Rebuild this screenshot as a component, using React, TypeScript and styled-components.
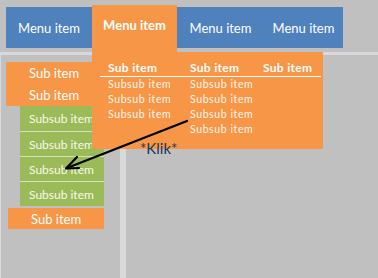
import React from "react";
import styled, { createGlobalStyle } from "styled-components";

const Global = createGlobalStyle`
  html, body { margin: 0; padding: 0; background: #c0c0c0; }
  body { font-family: Lato, "Open Sans", sans-serif; }
`;

const ORANGE = "#f79646";
const BLUE = "#4f81bd";
const GREEN = "#9bbb59";
const GRAY = "#c0c0c0";
const LIGHT = "#d9d9d9";

const Screen = styled.div`
  position: relative;
  width: 378px;
  height: 278px;
  overflow: hidden;
  background: ${GRAY};
  display: flex;
  flex-direction: column;
  font-family: Lato, "Open Sans", sans-serif;
`;

const Header = styled.div`
  height: 52px;
  box-sizing: border-box;
  padding: 7px 0 0 6px;
  flex-shrink: 0;
`;

const NavBar = styled.nav`
  display: flex;
  width: 337px;
  height: 41px;
  background: ${BLUE};
`;

const NavItem = styled.div<{ $w: number }>`
  position: relative;
  width: ${(p) => p.$w}px;
  display: flex;
  align-items: center;
  justify-content: center;
  color: #ffffff;
  font-size: 13px;
  white-space: nowrap;
`;

const ActiveTab = styled.div`
  position: absolute;
  left: 0;
  right: 0;
  top: -2px;
  bottom: -4px;
  background: ${ORANGE};
  color: #fff;
  font-weight: 700;
  font-size: 13px;
  display: flex;
  justify-content: center;
  padding-top: 12px;
  box-sizing: border-box;
  z-index: 2;
`;

const HStrip = styled.div`
  height: 3px;
  background: ${LIGHT};
  flex-shrink: 0;
`;

const Body = styled.div`
  flex: 1;
  display: flex;
`;

const LeftCol = styled.div`
  width: 119px;
  border-left: 1px solid ${LIGHT};
  padding-top: 7px;
  display: flex;
  flex-direction: column;
  align-items: flex-start;
`;

const VStrip = styled.div`
  width: 6px;
  background: ${LIGHT};
`;

const RightCol = styled.div`
  flex: 1;
`;

const SubBlock = styled.div<{ $ml: number; $w: number }>`
  margin-left: ${(p) => p.$ml}px;
  width: ${(p) => p.$w}px;
  background: ${ORANGE};
  display: flex;
  flex-direction: column;
`;

const SubItem = styled.div<{ $h: number }>`
  height: ${(p) => p.$h}px;
  display: flex;
  align-items: center;
  padding-left: 23px;
  color: #fff;
  font-size: 13px;
`;

const GreenBlock = styled.div`
  margin-left: 19px;
  width: 84px;
  display: flex;
  flex-direction: column;
`;

const GreenItem = styled.div<{ $first?: boolean }>`
  height: 25px;
  box-sizing: border-box;
  background: ${GREEN};
  border-top: ${(p) => (p.$first ? "none" : `1px solid #d4dfbd`)};
  display: flex;
  align-items: center;
  padding-left: 9px;
  color: #f8f8ea;
  font-size: 12px;
  white-space: nowrap;
  overflow: hidden;
`;

const Dropdown = styled.div`
  position: absolute;
  left: 92px;
  top: 52px;
  width: 231px;
  height: 97px;
  background: ${ORANGE};
  box-sizing: border-box;
  padding: 8px 2px 0 8px;
  z-index: 3;
`;

const HeaderRow = styled.div`
  display: grid;
  grid-template-columns: 82px 73px 1fr;
  padding-left: 8px;
  border-bottom: 1px solid #ffffff;
  height: 17px;
  box-sizing: border-box;
`;

const ColHead = styled.div`
  color: #fff;
  font-weight: 700;
  font-size: 12px;
  letter-spacing: 0.3px;
  line-height: 16px;
  white-space: nowrap;
`;

const Columns = styled.div`
  display: grid;
  grid-template-columns: 82px 73px 1fr;
  padding-left: 8px;
`;

const Col = styled.div`
  display: flex;
  flex-direction: column;
`;

const SubSub = styled.div`
  color: #fff6f2;
  font-size: 10.5px;
  letter-spacing: 0.6px;
  line-height: 15px;
  white-space: nowrap;
`;

const Klik = styled.div`
  position: absolute;
  left: 140px;
  top: 139px;
  font-size: 15px;
  line-height: 18px;
  color: #17375e;
  z-index: 4;
`;

const Overlay = styled.svg`
  position: absolute;
  left: 0;
  top: 0;
  z-index: 5;
  pointer-events: none;
`;

export default function App() {
  return (
    <>
      <Global />
      <Screen>
        <Header>
          <NavBar>
            <NavItem $w={86}>Menu item</NavItem>
            <NavItem $w={85}>
              <ActiveTab>Menu item</ActiveTab>
            </NavItem>
            <NavItem $w={87}>Menu item</NavItem>
            <NavItem $w={79}>Menu item</NavItem>
          </NavBar>
        </Header>
        <HStrip />
        <Body>
          <LeftCol>
            <SubBlock $ml={5} $w={98}>
              <SubItem $h={22}>Sub item</SubItem>
              <SubItem $h={22}>Sub item</SubItem>
            </SubBlock>
            <GreenBlock>
              <GreenItem $first>Subsub item</GreenItem>
              <GreenItem>Subsub item</GreenItem>
              <GreenItem>Subsub item</GreenItem>
              <GreenItem>Subsub item</GreenItem>
            </GreenBlock>
            <SubBlock $ml={7} $w={96} style={{ marginTop: 2 }}>
              <SubItem $h={21}>Sub item</SubItem>
            </SubBlock>
          </LeftCol>
          <VStrip />
          <RightCol />
        </Body>

        <Dropdown>
          <HeaderRow>
            <ColHead>Sub item</ColHead>
            <ColHead>Sub item</ColHead>
            <ColHead>Sub item</ColHead>
          </HeaderRow>
          <Columns>
            <Col>
              <SubSub>Subsub item</SubSub>
              <SubSub>Subsub item</SubSub>
              <SubSub>Subsub item</SubSub>
            </Col>
            <Col>
              <SubSub>Subsub item</SubSub>
              <SubSub>Subsub item</SubSub>
              <SubSub>Subsub item</SubSub>
              <SubSub>Subsub item</SubSub>
            </Col>
            <Col />
          </Columns>
        </Dropdown>

        <Klik>*Klik*</Klik>

        <Overlay width={378} height={278} viewBox="0 0 378 278">
          <line x1={187} y1={121} x2={67} y2={168} stroke="#000" strokeWidth={2.2} strokeLinecap="round" />
          <polyline points="77,157 66,168.5 79,168" fill="none" stroke="#000" strokeWidth={2.2} strokeLinecap="round" strokeLinejoin="round" />
        </Overlay>
      </Screen>
    </>
  );
}
